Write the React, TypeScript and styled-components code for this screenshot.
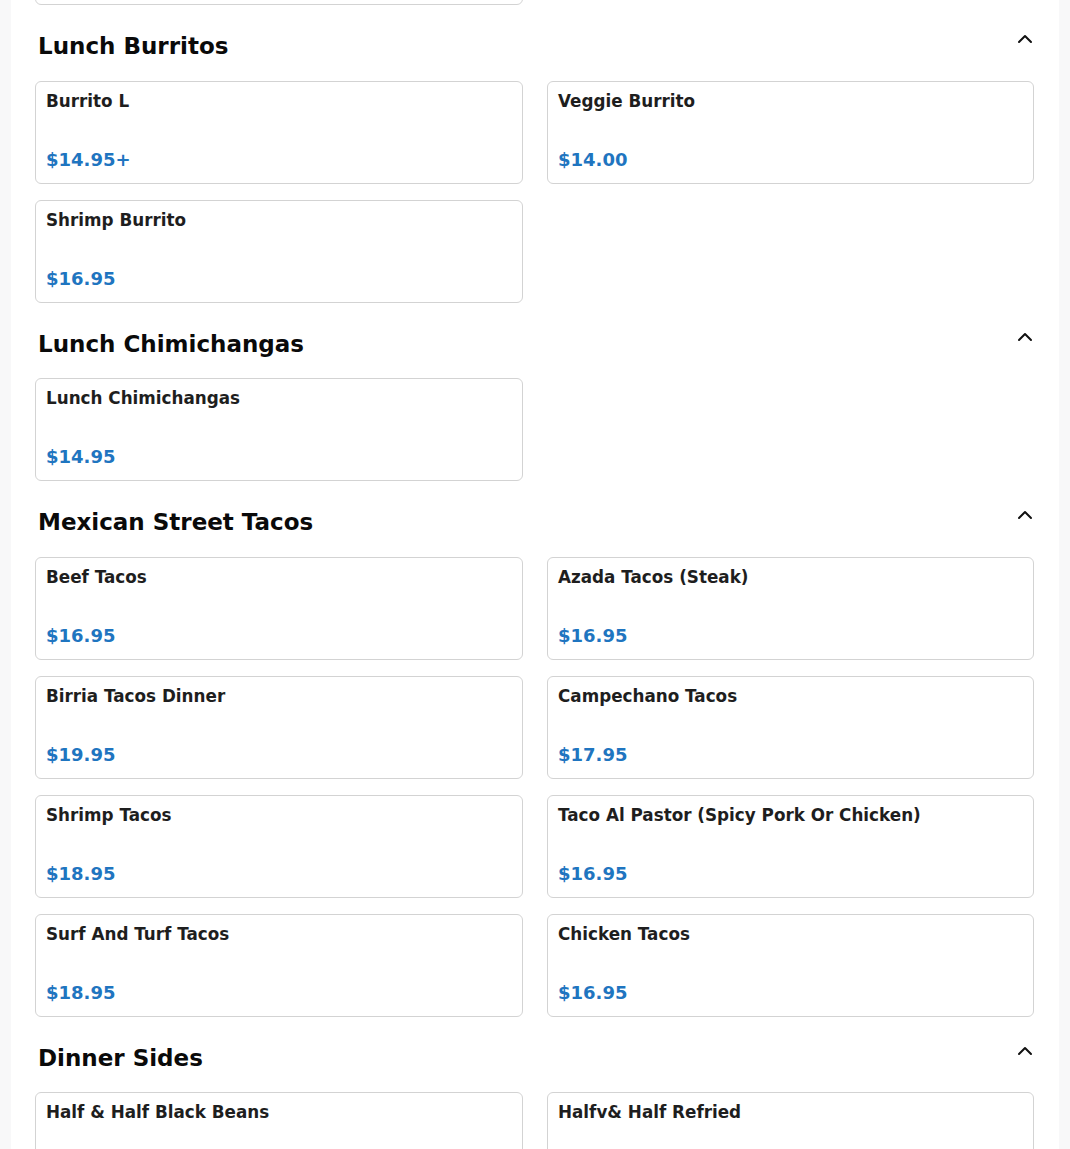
import React from 'react';
import styled, { createGlobalStyle } from 'styled-components';
import { ChevronUp } from 'lucide-react';

const GlobalStyle = createGlobalStyle`
  body {
    margin: 0;
    background: #f8f8f9;
    font-family: 'DejaVu Sans', 'Liberation Sans', sans-serif;
    overflow: hidden;
  }
`;

// the page is scrolled: the end of the previous category sits just above the fold
const Panel = styled.main`
  width: 1048px;
  margin: -98px auto 0;
  background: #fff;
  min-height: 1400px;
`;

const Section = styled.section``;

const Header = styled.div`
  display: flex;
  align-items: flex-start;
  justify-content: space-between;
  padding: 22px 22px 0 27px;
  margin-bottom: 21.5px;
`;

const Heading = styled.h2`
  margin: 6px 0 0;
  font-size: 23px;
  line-height: 26px;
  font-weight: 700;
  color: #0a0a0a;
`;

const Toggle = styled.button`
  display: flex;
  align-items: center;
  justify-content: center;
  width: 24px;
  height: 24px;
  padding: 0;
  border: none;
  background: none;
  color: #111;
  cursor: pointer;
`;

const Grid = styled.div`
  display: grid;
  grid-template-columns: 488px 487px;
  column-gap: 24px;
  row-gap: 16px;
  padding: 0 24px;
`;

const Card = styled.div`
  display: flex;
  flex-direction: column;
  justify-content: space-between;
  height: 103px;
  box-sizing: border-box;
  padding: 9px 10px 12px;
  border: 1px solid #d3d3d3;
  border-radius: 6px;
  background: #fff;
  cursor: pointer;
`;

const Name = styled.h3`
  margin: 0;
  font-size: 16.8px;
  line-height: 20px;
  font-weight: 700;
  color: #1e1e1e;
`;

const Price = styled.span`
  font-size: 18px;
  line-height: 22px;
  font-weight: 700;
  color: #1f75c0;
`;

interface Item {
  name: string;
  price: string;
}

interface Category {
  title: string;
  items: Item[];
}

const menu: Category[] = [
  {
    title: 'Lunch Burritos',
    items: [
      { name: 'Burrito L', price: '$14.95+' },
      { name: 'Veggie Burrito', price: '$14.00' },
      { name: 'Shrimp Burrito', price: '$16.95' },
    ],
  },
  {
    title: 'Lunch Chimichangas',
    items: [{ name: 'Lunch Chimichangas', price: '$14.95' }],
  },
  {
    title: 'Mexican Street Tacos',
    items: [
      { name: 'Beef Tacos', price: '$16.95' },
      { name: 'Azada Tacos (Steak)', price: '$16.95' },
      { name: 'Birria Tacos Dinner', price: '$19.95' },
      { name: 'Campechano Tacos', price: '$17.95' },
      { name: 'Shrimp Tacos', price: '$18.95' },
      { name: 'Taco Al Pastor (Spicy Pork Or Chicken)', price: '$16.95' },
      { name: 'Surf And Turf Tacos', price: '$18.95' },
      { name: 'Chicken Tacos', price: '$16.95' },
    ],
  },
  {
    title: 'Dinner Sides',
    items: [
      { name: 'Half & Half Black Beans', price: '$5.95' },
      { name: 'Halfv& Half Refried', price: '$5.95' },
    ],
  },
];

const MenuCard: React.FC<{ item: Item }> = ({ item }) => (
  <Card>
    <Name>{item.name}</Name>
    <Price>{item.price}</Price>
  </Card>
);

const MenuSection: React.FC<{ category: Category }> = ({ category }) => (
  <Section>
    <Header>
      <Heading>{category.title}</Heading>
      <Toggle aria-label="Collapse section">
        <ChevronUp size={24} strokeWidth={2} />
      </Toggle>
    </Header>
    <Grid>
      {category.items.map((item) => (
        <MenuCard key={item.name} item={item} />
      ))}
    </Grid>
  </Section>
);

export default function App() {
  return (
    <>
      <GlobalStyle />
      <Panel>
        <Grid>
          <Card aria-hidden />
        </Grid>
        {menu.map((category) => (
          <MenuSection key={category.title} category={category} />
        ))}
      </Panel>
    </>
  );
}
